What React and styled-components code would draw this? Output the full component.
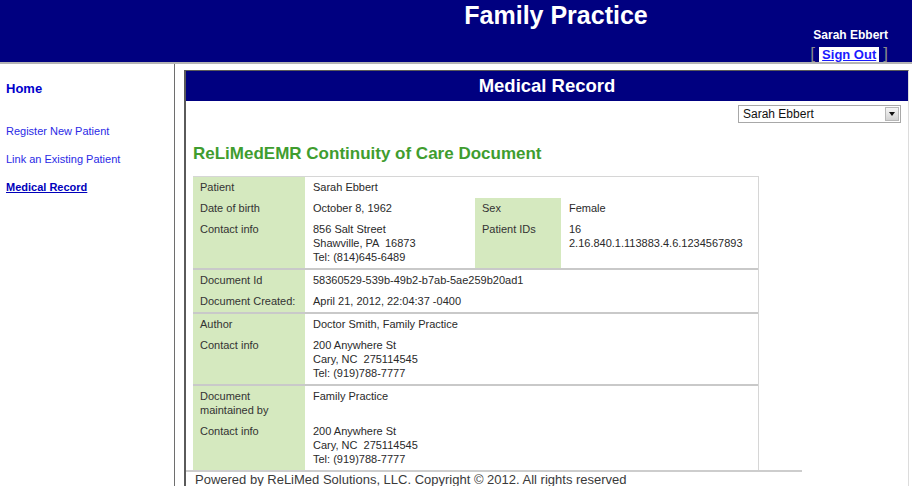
import React from 'react';
import styled, { createGlobalStyle } from 'styled-components';

const GlobalStyle = createGlobalStyle`
  html, body {
    margin: 0;
    padding: 0;
    background: #fff;
    overflow: hidden;
  }
  body {
    font-family: "Liberation Sans", Arial, sans-serif;
  }
`;

const Page = styled.div`
  width: 912px;
  height: 486px;
  overflow: hidden;
`;

// Top banner
const Header = styled.header`
  height: 62px;
  background: #000080;
  border-bottom: 2px solid #b4b4b4;
  overflow: hidden;
`;

const SiteTitle = styled.h1`
  margin: 0;
  padding: 2px 0 0 200px;
  font-size: 25px;
  line-height: 26px;
  font-weight: 700;
  color: #fff;
  text-align: center;
`;

const UserBlock = styled.div`
  text-align: right;
  padding-right: 24px;
`;

const UserName = styled.div`
  font-size: 12px;
  line-height: 14px;
  font-weight: 700;
  color: #fff;
`;

const SignOutRow = styled.div`
  margin-top: 4px;
  line-height: 16px;
  display: flex;
  justify-content: flex-end;
  align-items: center;
  gap: 4px;
`;

const Bracket = styled.span`
  color: #8a8a8a;
  font-size: 17px;
`;

const SignOutLink = styled.a`
  background: #fff;
  color: #1a1aff;
  font-size: 13px;
  font-weight: 700;
  text-decoration: underline;
  padding: 0 3px;
  line-height: 15px;
`;

// Body
const Main = styled.div`
  display: flex;
  height: 422px;
`;

const Sidebar = styled.nav`
  width: 175px;
  flex-shrink: 0;
  border-right: 1px solid #6e6e6e;
  padding: 17px 6px 0;
  box-sizing: border-box;
  display: flex;
  flex-direction: column;
`;

const HomeLink = styled.a`
  font-size: 13px;
  line-height: 16px;
  font-weight: 700;
  color: #0000cc;
  margin-bottom: 27px;
`;

const NavLink = styled.a`
  font-size: 11px;
  line-height: 14px;
  color: ${p => (p.$active ? '#0000bb' : '#2a2ae6')};
  font-weight: ${p => (p.$active ? 700 : 400)};
  text-decoration: ${p => (p.$active ? 'underline' : 'none')};
  margin-bottom: 14px;
`;

const Content = styled.main`
  flex: 1;
  padding: 6px 0 0 9px;
  overflow: hidden;
`;

const Panel = styled.section`
  width: 725px;
  height: 100%;
  box-sizing: border-box;
  border-left: 2px solid #5a5a5a;
  border-top: 1px solid #5a5a5a;
  border-right: 1px solid #dcdcdc;
`;

const TitleBar = styled.div`
  height: 30px;
  line-height: 30px;
  background: #000080;
  color: #fff;
  font-size: 18.5px;
  font-weight: 700;
  text-align: center;
`;

const SelectRow = styled.div`
  display: flex;
  justify-content: flex-end;
  padding: 4px 7px 0 0;
`;

const SelectBox = styled.div`
  width: 163px;
  height: 18px;
  box-sizing: border-box;
  border: 1px solid #a8a8a8;
  display: flex;
  align-items: center;
  justify-content: space-between;
  padding-left: 4px;
  font-family: "Liberation Sans", Arial, sans-serif;
  font-size: 12px;
  color: #111;
`;

const DropButton = styled.span`
  width: 14px;
  height: 14px;
  margin-right: 1px;
  box-sizing: border-box;
  border: 1px solid #b8b8b8;
  background: linear-gradient(#f6f6f6, #d2d2d2);
  display: flex;
  align-items: center;
  justify-content: center;

  &::after {
    content: '';
    border-left: 3.5px solid transparent;
    border-right: 3.5px solid transparent;
    border-top: 4px solid #111;
  }
`;

const DocTitle = styled.h2`
  margin: 21px 0 12px 7px;
  font-size: 17px;
  line-height: 20px;
  font-weight: 700;
  color: #3f9d2f;
`;

const RecordTable = styled.div`
  width: 566px;
  margin-left: 7px;
  border-top: 1px solid #d6d6d6;
  border-right: 1px solid #d6d6d6;
  box-sizing: border-box;
`;

const Group = styled.div`
  display: grid;
  grid-template-columns: 112px 170px 86px 1fr;

  & + & {
    border-top: 2px solid #c9c9c9;
  }
`;

const Label = styled.div`
  background: #d5e9bf;
  padding: 3px 7px 4px;
  font-size: 11px;
  line-height: 14px;
  color: #333;
`;

const Value = styled.div`
  grid-column: span ${p => p.$span || 1};
  padding: 3px 8px 4px;
  font-size: 11px;
  line-height: 14px;
  color: #2a2a2a;
  white-space: pre-wrap;
`;

const FooterRule = styled.div`
  width: 616px;
  border-top: 2px solid #cdcdcd;
`;

const Footer = styled.footer`
  padding-left: 9px;
  font-size: 13px;
  line-height: 15px;
  color: #3a3a3a;
  white-space: nowrap;
`;

const Lines = ({ items }) => items.map((t, i) => <div key={i}>{t}</div>);

export default function App() {
  return (
    <Page>
      <GlobalStyle />
      <Header>
        <SiteTitle>Family Practice</SiteTitle>
        <UserBlock>
          <UserName>Sarah Ebbert</UserName>
          <SignOutRow>
            <Bracket>[</Bracket>
            <SignOutLink href="#">Sign Out</SignOutLink>
            <Bracket>]</Bracket>
          </SignOutRow>
        </UserBlock>
      </Header>
      <Main>
        <Sidebar>
          <HomeLink>Home</HomeLink>
          <NavLink>Register New Patient</NavLink>
          <NavLink>Link an Existing Patient</NavLink>
          <NavLink $active>Medical Record</NavLink>
        </Sidebar>
        <Content>
          <Panel>
            <TitleBar>Medical Record</TitleBar>
            <SelectRow>
              <SelectBox>
                Sarah Ebbert
                <DropButton />
              </SelectBox>
            </SelectRow>
            <DocTitle>ReLiMedEMR Continuity of Care Document</DocTitle>
            <RecordTable>
              <Group>
                <Label>Patient</Label>
                <Value $span={3}>Sarah Ebbert</Value>
                <Label>Date of birth</Label>
                <Value>October 8, 1962</Value>
                <Label>Sex</Label>
                <Value>Female</Value>
                <Label>Contact info</Label>
                <Value>
                  <Lines items={['856 Salt Street', 'Shawville, PA  16873', 'Tel: (814)645-6489']} />
                </Value>
                <Label>Patient IDs</Label>
                <Value>
                  <Lines items={['16', '2.16.840.1.113883.4.6.1234567893']} />
                </Value>
              </Group>
              <Group>
                <Label>Document Id</Label>
                <Value $span={3}>58360529-539b-49b2-b7ab-5ae259b20ad1</Value>
                <Label>Document Created:</Label>
                <Value $span={3}>April 21, 2012, 22:04:37 -0400</Value>
              </Group>
              <Group>
                <Label>Author</Label>
                <Value $span={3}>Doctor Smith, Family Practice</Value>
                <Label>Contact info</Label>
                <Value $span={3}>
                  <Lines items={['200 Anywhere St', 'Cary, NC  275114545', 'Tel: (919)788-7777']} />
                </Value>
              </Group>
              <Group>
                <Label>
                  Document
                  <br />
                  maintained by
                </Label>
                <Value $span={3}>Family Practice</Value>
                <Label>Contact info</Label>
                <Value $span={3}>
                  <Lines items={['200 Anywhere St', 'Cary, NC  275114545', 'Tel: (919)788-7777']} />
                </Value>
              </Group>
            </RecordTable>
            <FooterRule />
            <Footer>Powered by ReLiMed Solutions, LLC. Copyright © 2012. All rights reserved</Footer>
          </Panel>
        </Content>
      </Main>
    </Page>
  );
}
